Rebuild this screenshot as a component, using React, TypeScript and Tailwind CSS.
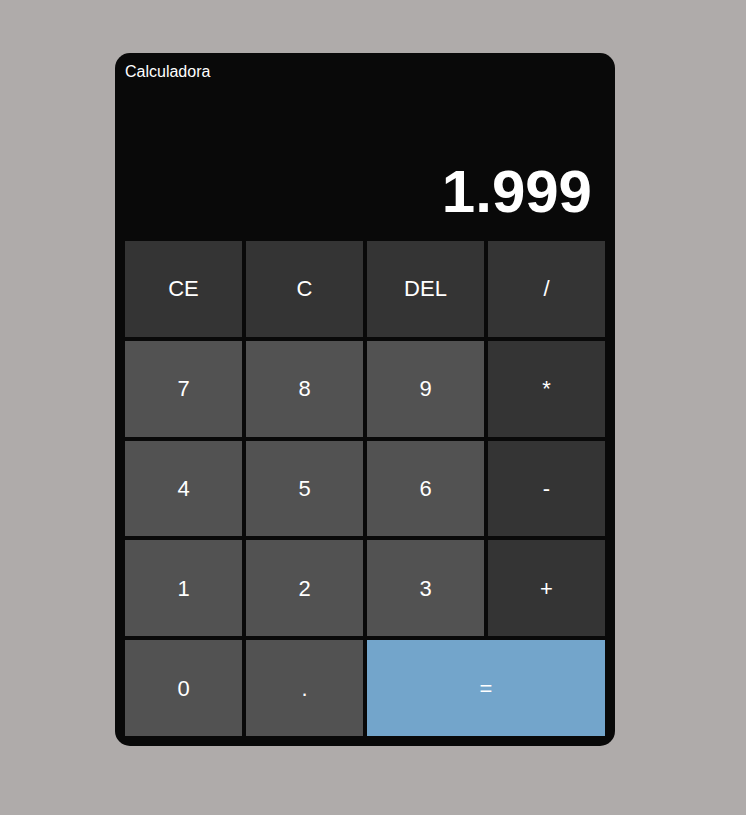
import React from "react";

type B = { label: string; kind: "op" | "num" | "eq"; span?: boolean };

const buttons: B[] = [
  { label: "CE", kind: "op" },
  { label: "C", kind: "op" },
  { label: "DEL", kind: "op" },
  { label: "/", kind: "op" },
  { label: "7", kind: "num" },
  { label: "8", kind: "num" },
  { label: "9", kind: "num" },
  { label: "*", kind: "op" },
  { label: "4", kind: "num" },
  { label: "5", kind: "num" },
  { label: "6", kind: "num" },
  { label: "-", kind: "op" },
  { label: "1", kind: "num" },
  { label: "2", kind: "num" },
  { label: "3", kind: "num" },
  { label: "+", kind: "op" },
  { label: "0", kind: "num" },
  { label: ".", kind: "num" },
  { label: "=", kind: "eq", span: true },
];

export default function App() {
  return (
    <div
      className="min-h-[815px] w-full bg-[#afabaa] pt-[53px]"
      style={{ fontFamily: '"Liberation Sans", Arial, sans-serif' }}
    >
      <div className="ml-[115px] w-[500px] rounded-[15px] bg-[#090909] p-[10px]">
        <div className="flex h-[178px] flex-col">
          <div className="mt-[1px] text-[16px] leading-4 text-white">Calculadora</div>
          <div className="mt-auto mb-[19px] pr-[13px] text-right text-[60px] font-bold leading-none text-white">
            1.999
          </div>
        </div>
        <div className="grid grid-cols-4 gap-[4px]">
          {buttons.map((b) => (
            <button
              key={b.label}
              className={
                "flex h-[95.8px] items-center justify-center text-[22px] text-white " +
                (b.kind === "op"
                  ? "bg-[#343434]"
                  : b.kind === "num"
                  ? "bg-[#525252]"
                  : "col-span-2 bg-[#73a5cb]")
              }
            >
              {b.label}
            </button>
          ))}
        </div>
      </div>
    </div>
  );
}
